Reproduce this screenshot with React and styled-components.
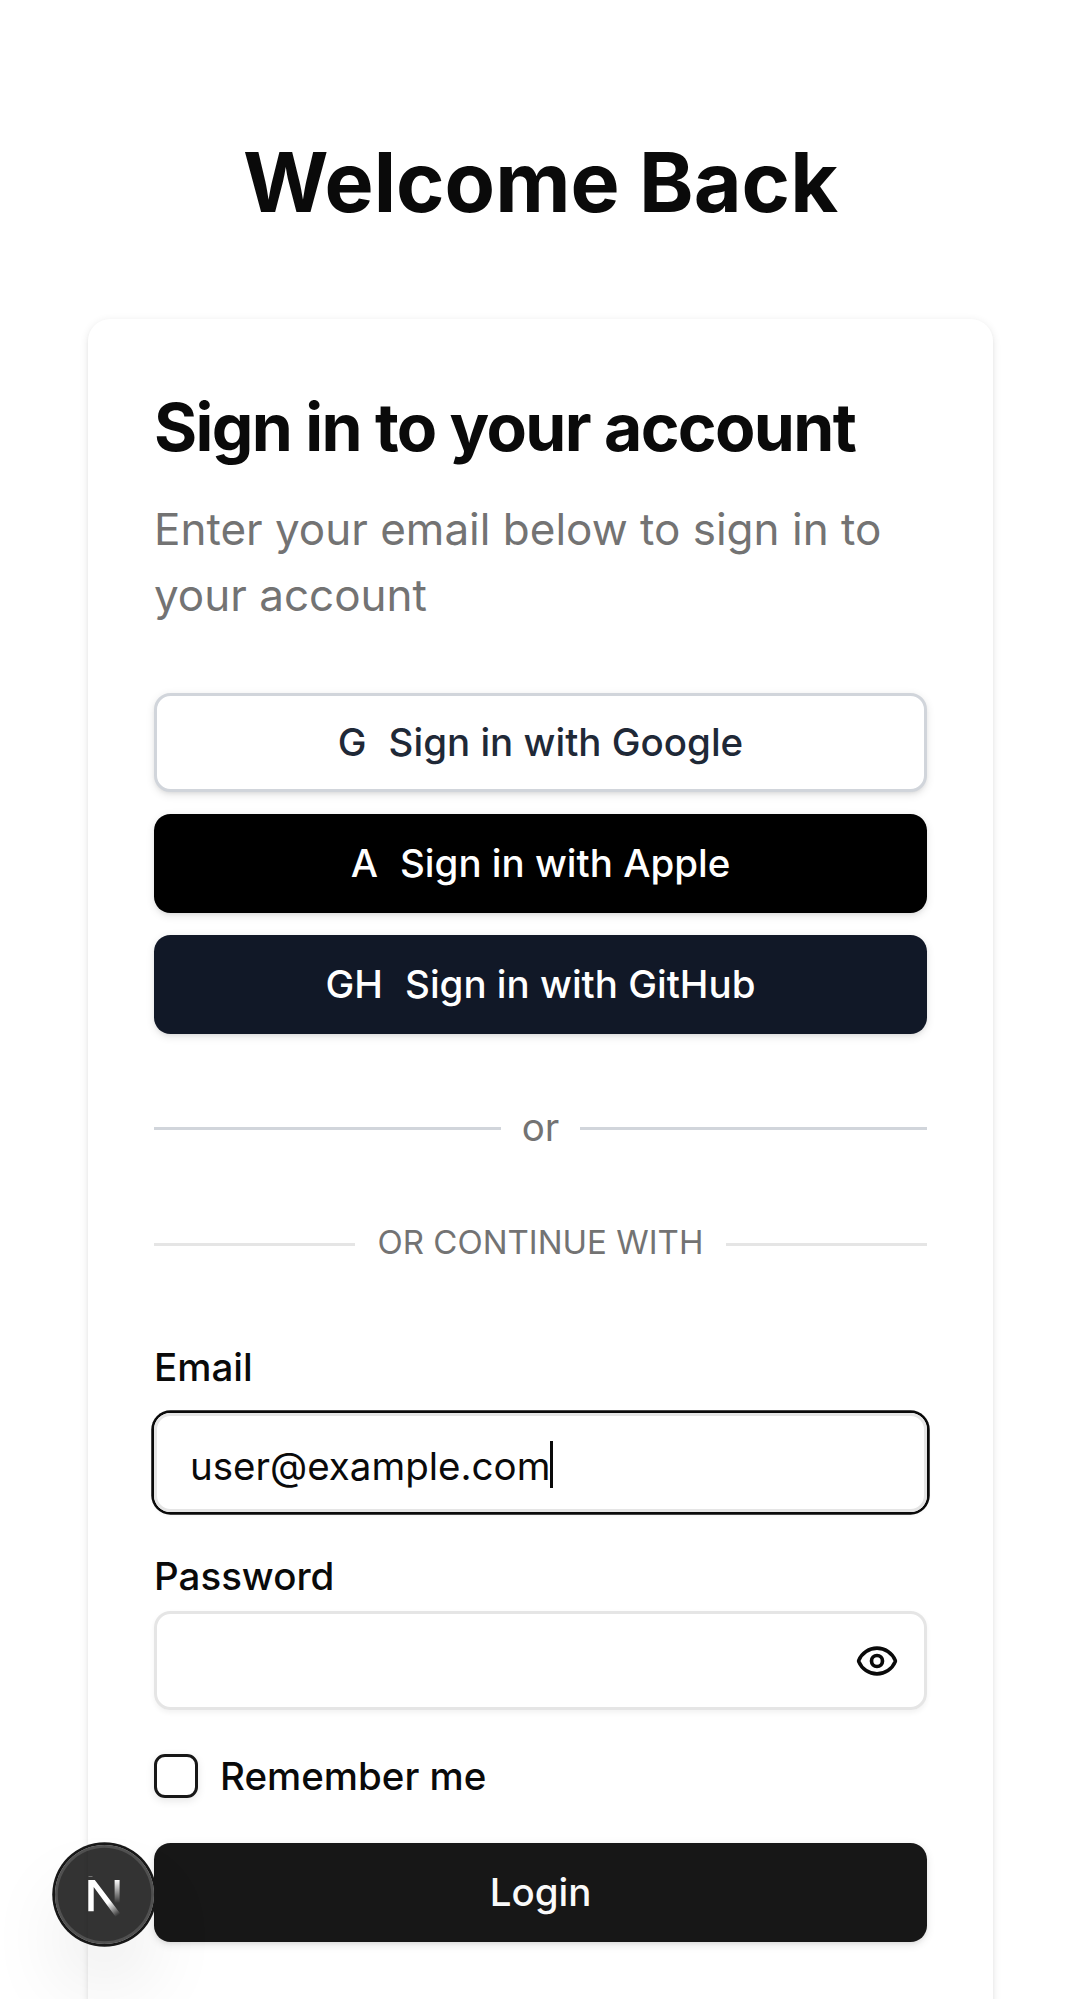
import React from "react";
import styled, { createGlobalStyle } from "styled-components";

const Global = createGlobalStyle`
  *, *::before, *::after { box-sizing: border-box; }
  html, body { margin: 0; padding: 0; background: #fff; }
  body { font-family: Inter, "Liberation Sans", sans-serif; color: #0a0a0a; overflow: hidden; }
  h1, h2, p { margin: 0; }
  button { font: inherit; border: 0; cursor: pointer; }
`;

const Page = styled.main`
  height: 1999px;
  padding: 133px 88px 0;
  overflow: hidden;
`;

const Heading = styled.h1`
  font-size: 82.5px;
  line-height: 99px;
  font-weight: 700;
  text-align: center;
  margin-bottom: 87px;
`;

const Card = styled.section`
  height: 1900px;
  padding: 66px;
  border-radius: 22px;
  background: #fff;
  box-shadow: 0 2.75px 8.25px rgba(0, 0, 0, 0.1), 0 2.75px 5.5px -2.75px rgba(0, 0, 0, 0.1);
`;

const Title = styled.h2`
  font-size: 66px;
  line-height: 84px;
  font-weight: 700;
  letter-spacing: -1.65px;
  white-space: nowrap;
`;

const Description = styled.p`
  margin-top: 27px;
  font-size: 44px;
  line-height: 66px;
  color: #737373;
`;

const Providers = styled.div`
  display: flex;
  flex-direction: column;
  gap: 22px;
  margin-top: 65px;
`;

const Button = styled.button`
  display: flex;
  align-items: center;
  justify-content: center;
  gap: 22px;
  width: 100%;
  height: 99px;
  padding: 0;
  border: ${(p) => (p.$border ? `3px solid ${p.$border}` : "0")};
  border-radius: 16.5px;
  background: ${(p) => p.$bg};
  color: ${(p) => p.$color};
  font-size: 38.5px;
  line-height: 55px;
  font-weight: 500;
  box-shadow: 0 2.75px 8.25px rgba(0, 0, 0, 0.1), 0 2.75px 5.5px -2.75px rgba(0, 0, 0, 0.1);
`;

const Divider = styled.div`
  display: flex;
  align-items: center;
  gap: ${(p) => p.$gap}px;
  margin-top: ${(p) => p.$before}px;
  font-size: ${(p) => p.$size}px;
  line-height: ${(p) => p.$line}px;
  color: #737373;

  &::before,
  &::after {
    content: "";
    flex: 1;
    height: 3px;
    margin-top: ${(p) => p.$drop}px;
    background: ${(p) => p.$rule};
  }
`;

const Label = styled.label`
  display: block;
  font-size: 38.5px;
  line-height: 38px;
  font-weight: 500;
`;

const Form = styled.form`
  display: flex;
  flex-direction: column;
  padding-top: 84px;
`;

const Field = styled.div`
  display: flex;
  flex-direction: column;
  gap: ${(p) => p.$gap}px;
  margin-bottom: ${(p) => p.$after}px;
`;

const Box = styled.div`
  display: flex;
  align-items: center;
  justify-content: ${(p) => (p.$end ? "flex-end" : "flex-start")};
  height: 99px;
  padding: 0 25px 0 33px;
  border: 3px solid #e5e5e5;
  border-radius: 16.5px;
  font-size: 38.5px;
  line-height: 55px;
  box-shadow: ${(p) => (p.$focused ? "0 0 0 2.75px #0a0a0a, " : "")}0 2.75px 5.5px rgba(0, 0, 0, 0.05);

  svg {
    margin-top: 2px;
  }
`;

const Value = styled.span`
  padding-top: 7px;
`;

const Caret = styled.span`
  width: 3px;
  height: 47px;
  margin-top: 3px;
  background: #0a0a0a;
`;

const Remember = styled.div`
  display: flex;
  align-items: center;
  gap: 22px;
  margin-bottom: 45px;
`;

const Checkbox = styled.span`
  width: 44px;
  height: 44px;
  border: 3px solid #171717;
  border-radius: 11px;
  box-shadow: 0 2.75px 8.25px rgba(0, 0, 0, 0.1);
`;

const DevBadge = styled.div`
  position: fixed;
  left: 55px;
  top: 1845px;
  width: 99px;
  height: 99px;
  border-radius: 50%;
  display: flex;
  align-items: center;
  justify-content: center;
  background: rgba(0, 0, 0, 0.8);
  box-shadow: 0 0 0 2.75px #171717, inset 0 0 0 2.75px rgba(255, 255, 255, 0.14),
    0 44px 88px -22px rgba(0, 0, 0, 0.24);
`;

const EyeIcon = () => (
  <svg width="44" height="44" viewBox="0 0 24 24" fill="none" stroke="#0a0a0a" strokeWidth="2" strokeLinecap="round" strokeLinejoin="round">
    <path d="M2.062 12.348a1 1 0 0 1 0-.696 10.75 10.75 0 0 1 19.876 0 1 1 0 0 1 0 .696 10.75 10.75 0 0 1-19.876 0" />
    <circle cx="12" cy="12" r="3" />
  </svg>
);

const NextMark = () => (
  <svg width="36" height="48" viewBox="0 0 36 48" fill="none">
    <defs>
      <linearGradient id="diag" x1="22" y1="31" x2="31.5" y2="44" gradientUnits="userSpaceOnUse">
        <stop stopColor="#fff" />
        <stop offset="1" stopColor="#fff" stopOpacity="0" />
      </linearGradient>
      <linearGradient id="stem" x1="0" y1="9" x2="0" y2="32" gradientUnits="userSpaceOnUse">
        <stop stopColor="#fff" />
        <stop offset="1" stopColor="#fff" stopOpacity="0" />
      </linearGradient>
    </defs>
    <path d="M1.3 40.3V9H7.8L34 43.5L29.5 47L6.7 16V40.3Z" fill="url(#diag)" />
    <path d="M27.6 9H32.6V32H27.6Z" fill="url(#stem)" />
    <path d="M1.5 5H5.5V5.9H1.5Z" fill="#fff" fillOpacity="0.35" />
  </svg>
);

const providers = [
  { mark: "G", name: "Google", bg: "#fff", color: "#1f2937", border: "#d1d5db" },
  { mark: "A", name: "Apple", bg: "#000", color: "#fff" },
  { mark: "GH", name: "GitHub", bg: "#111827", color: "#fff" },
];

export default function App() {
  return (
    <>
      <Global />
      <Page>
        <Heading>Welcome Back</Heading>
        <Card>
          <Title>Sign in to your account</Title>
          <Description>Enter your email below to sign in to your account</Description>
          <Providers>
            {providers.map((p) => (
              <Button key={p.name} $bg={p.bg} $color={p.color} $border={p.border}>
                <span>{p.mark}</span>
                <span>Sign in with {p.name}</span>
              </Button>
            ))}
          </Providers>
          <Divider $size={38.5} $line={55} $gap={21} $before={66} $drop={2} $rule="#d1d5db">or</Divider>
          <Divider $size={33} $line={44} $gap={23} $before={65} $drop={4} $rule="#e5e5e5">OR CONTINUE WITH</Divider>
          <Form onSubmit={(e) => e.preventDefault()}>
            <Field $gap={27.4} $after={44.6}>
              <Label>Email</Label>
              <Box $focused>
                <Value>user@example.com</Value>
                <Caret />
              </Box>
            </Field>
            <Field $gap={16} $after={44}>
              <Label>Password</Label>
              <Box $end>
                <EyeIcon />
              </Box>
            </Field>
            <Remember>
              <Checkbox />
              <Label>Remember me</Label>
            </Remember>
            <Button $bg="#171717" $color="#fafafa">Login</Button>
          </Form>
        </Card>
      </Page>
      <DevBadge>
        <NextMark />
      </DevBadge>
    </>
  );
}
